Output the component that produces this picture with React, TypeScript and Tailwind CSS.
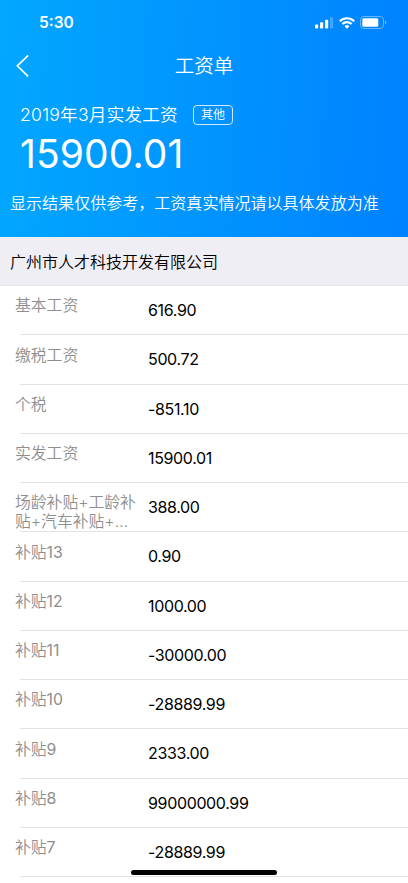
import React from 'react';

const ROWS: { label: string; suffix?: string; value: string }[] = [
  { label: '基本工资', value: '616.90' },
  { label: '缴税工资', value: '500.72' },
  { label: '个税', value: '-851.10' },
  { label: '实发工资', value: '15900.01' },
  { label: '场龄补贴+工龄补贴+汽车补贴+…', value: '388.00' },
  { label: '补贴', suffix: '13', value: '0.90' },
  { label: '补贴', suffix: '12', value: '1000.00' },
  { label: '补贴', suffix: '11', value: '-30000.00' },
  { label: '补贴', suffix: '10', value: '-28889.99' },
  { label: '补贴', suffix: '9', value: '2333.00' },
  { label: '补贴', suffix: '8', value: '99000000.99' },
  { label: '补贴', suffix: '7', value: '-28889.99' },
];

const StatusBar: React.FC = () => (
  <div className="h-[45px] pl-[39px] pr-[21px] flex items-center justify-between">
    <span className="text-[15.5px] leading-none font-semibold">5:30</span>
    <div className="flex items-center">
      <svg width="19" height="12" viewBox="0 0 19 12" fill="currentColor">
        <rect x="0" y="7.5" width="3.2" height="4" rx="0.8" />
        <rect x="5" y="5.3" width="3.2" height="6.2" rx="0.8" />
        <rect x="10" y="2.7" width="3.2" height="8.8" rx="0.8" />
        <rect x="15" y="0.2" width="3.2" height="11.3" rx="0.8" opacity="0.25" />
      </svg>
      <svg className="ml-[5px]" width="16" height="12" viewBox="0 0 16 12" fill="none" stroke="currentColor" strokeWidth="2.1">
        <path d="M0.8 4.2a10.3 10.3 0 0 1 14.4 0" />
        <path d="M3.4 7a6.5 6.5 0 0 1 9.2 0" />
        <path d="M8 11.7 5.6 9.3a3.4 3.4 0 0 1 4.8 0Z" fill="currentColor" stroke="none" />
      </svg>
      <svg className="ml-[5px]" width="27" height="13" viewBox="0 0 27 13" fill="none">
        <rect x="0.5" y="0.5" width="23" height="12" rx="3.4" stroke="currentColor" opacity="0.4" />
        <rect x="2.3" y="2.3" width="16" height="8.4" rx="1.5" fill="currentColor" />
        <path d="M25 4.5v4.2a2.3 2.3 0 0 0 0-4.2Z" fill="currentColor" opacity="0.45" />
      </svg>
    </div>
  </div>
);

const App: React.FC = () => {
  return (
    <div className="relative w-[408px] h-[883px] overflow-hidden bg-white text-black font-['Inter','Noto_Sans_CJK_SC',sans-serif]">
      <header className="h-[237px] text-white bg-linear-[93deg,#02a7ff,#0082ff]">
        <StatusBar />
        <nav className="h-[42px] px-[16px] grid grid-cols-3 items-center">
          <svg width="14" height="24" viewBox="0 0 14 24" fill="none" stroke="currentColor" strokeWidth="1.7">
            <path d="M12.2 1.3 1.3 11.8 12.2 22.3" />
          </svg>
          <h1 className="text-center text-[19.5px] leading-[28px] font-[350]">工资单</h1>
        </nav>
        <div className="pl-[20px] pt-[16px] h-[39px] flex items-center">
          <span className="text-[17.6px] leading-[24px] tracking-[0.23px] font-[350] whitespace-nowrap">2019年3月实发工资</span>
          <span className="ml-[15px] w-[40px] h-[20px] rounded-[4px] border border-white/80 text-[12px] leading-[18px] font-[350] text-center">其他</span>
        </div>
        <div className="pl-[20px] h-[56px] text-[39px] leading-[55px] tracking-[0.1px] font-normal">15900.01</div>
        <p className="pl-[10px] pt-[9px] text-[16.05px] leading-[24px] font-[350] whitespace-nowrap">
          显示结果仅供参考，工资真实情况请以具体发放为准
        </p>
      </header>

      <h2 className="h-[49px] pl-[10px] bg-[#efeef4] border-b border-[#e4e4e8] text-[16px] leading-[50px] font-[350]">
        广州市人才科技开发有限公司
      </h2>

      <ul>
        {ROWS.map((row) => (
          <li key={row.label + row.suffix} className="h-[49.27px] flex flex-col">
            <div className="flex-1 min-h-0 pl-[15px] flex">
              <div className="w-[133px] pt-[11.3px] pr-[8px] text-[15.8px] leading-[18.5px] font-[350] text-[#8e8e8e]">
                {row.label}
                {row.suffix && <span className="font-normal">{row.suffix}</span>}
              </div>
              <div className="pt-[12px] text-[16px] leading-[24px] tracking-[-0.35px]">{row.value}</div>
            </div>
            <div className="ml-[20px] h-px bg-[#e3e3e5]" />
          </li>
        ))}
      </ul>

      {/* home indicator */}
      <div className="absolute left-[131px] top-[870px] w-[146px] h-[5px] rounded-full bg-black" />
    </div>
  );
};

export default App;
